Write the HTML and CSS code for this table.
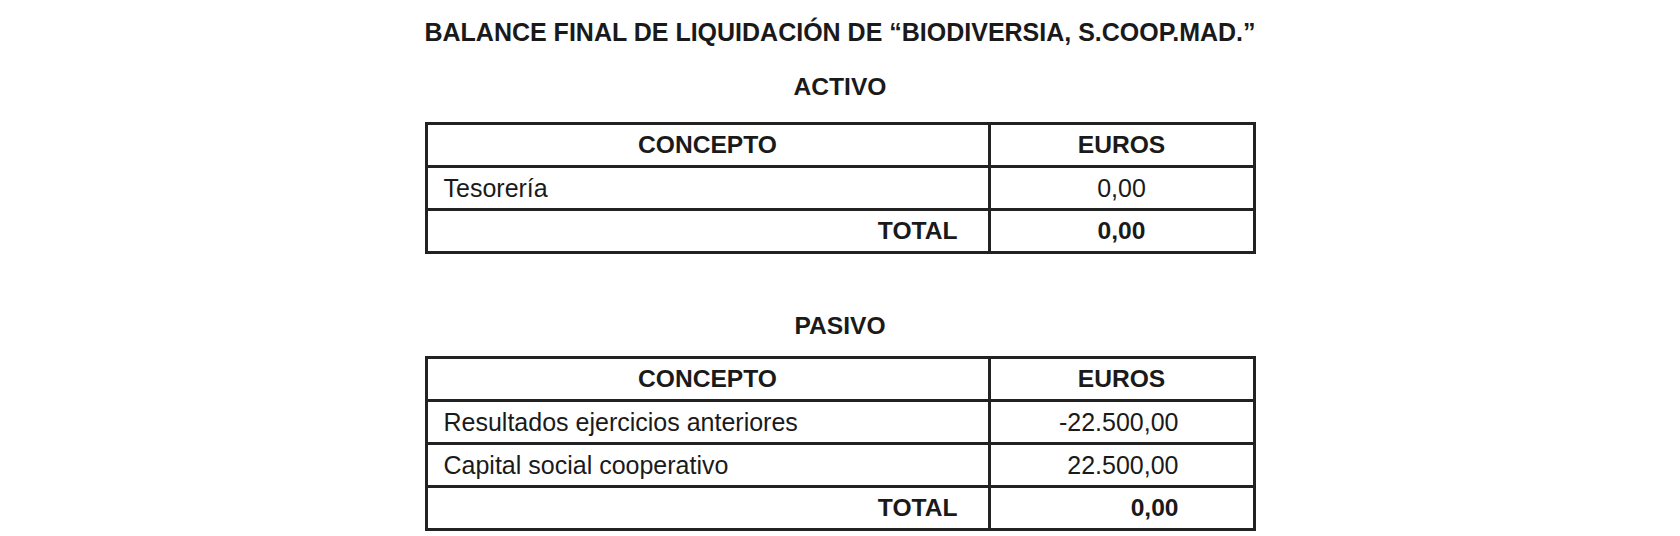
FILE: index.html
```html
<!DOCTYPE html>
<html lang="es">
<head>
<meta charset="utf-8">
<title>Balance final de liquidación</title>
<link rel="stylesheet" href="styles.css">
</head>
<body>
<main class="doc">
  <h1 class="title">BALANCE FINAL DE LIQUIDACIÓN DE “BIODIVERSIA, S.COOP.MAD.”</h1>

  <h2 class="section section-activo">ACTIVO</h2>
  <table class="balance balance-activo">
    <colgroup><col class="col-concepto"><col class="col-euros"></colgroup>
    <thead>
      <tr><th>CONCEPTO</th><th>EUROS</th></tr>
    </thead>
    <tbody>
      <tr><td class="concepto">Tesorería</td><td class="euros">0,00</td></tr>
      <tr class="total"><td class="concepto">TOTAL</td><td class="euros">0,00</td></tr>
    </tbody>
  </table>

  <h2 class="section section-pasivo">PASIVO</h2>
  <table class="balance balance-pasivo">
    <colgroup><col class="col-concepto"><col class="col-euros"></colgroup>
    <thead>
      <tr><th>CONCEPTO</th><th>EUROS</th></tr>
    </thead>
    <tbody>
      <tr><td class="concepto">Resultados ejercicios anteriores</td><td class="euros">-22.500,00</td></tr>
      <tr><td class="concepto">Capital social cooperativo</td><td class="euros">22.500,00</td></tr>
      <tr class="total"><td class="concepto">TOTAL</td><td class="euros">0,00</td></tr>
    </tbody>
  </table>
</main>
</body>
</html>
```

FILE: styles.css
```css
html, body {
  margin: 0;
  padding: 0;
  background: #ffffff;
}

body {
  font-family: "Liberation Sans", Arial, Helvetica, sans-serif;
  color: #1a1a1a;
  font-size: 24.6px;
}

.doc {
  display: flex;
  flex-direction: column;
  align-items: center;
  padding-top: 17px;
}

.title {
  margin: 0;
  font-size: 25px;
  font-weight: bold;
  line-height: 30px;
}

.section {
  margin: 0;
  font-size: 24.6px;
  font-weight: bold;
  line-height: 30px;
}

.section-activo {
  margin-top: 25px;
  margin-bottom: 20px;
}

.section-pasivo {
  margin-top: 57px;
  margin-bottom: 15px;
}

.balance {
  width: 831px;
  table-layout: fixed;
  border-collapse: separate;
  border-spacing: 3px;
  background: #222222;
}

.col-concepto {
  width: 560px;
}

.col-euros {
  width: 262px;
}

.balance th,
.balance td {
  background: #ffffff;
  height: 40px;
  padding: 0;
  line-height: 40px;
  font-size: 25px;
  white-space: nowrap;
}

.balance th {
  font-size: 24.6px;
  font-weight: bold;
  text-align: center;
}

.balance td.concepto {
  text-align: left;
  padding-left: 16px;
}

.balance td.euros {
  text-align: center;
}

.balance .total td {
  font-size: 24.6px;
  font-weight: bold;
}

.balance .total td.concepto {
  text-align: right;
  padding-left: 0;
  padding-right: 30px;
}

.balance-pasivo td.euros {
  text-align: right;
  padding-right: 74px;
}
```
